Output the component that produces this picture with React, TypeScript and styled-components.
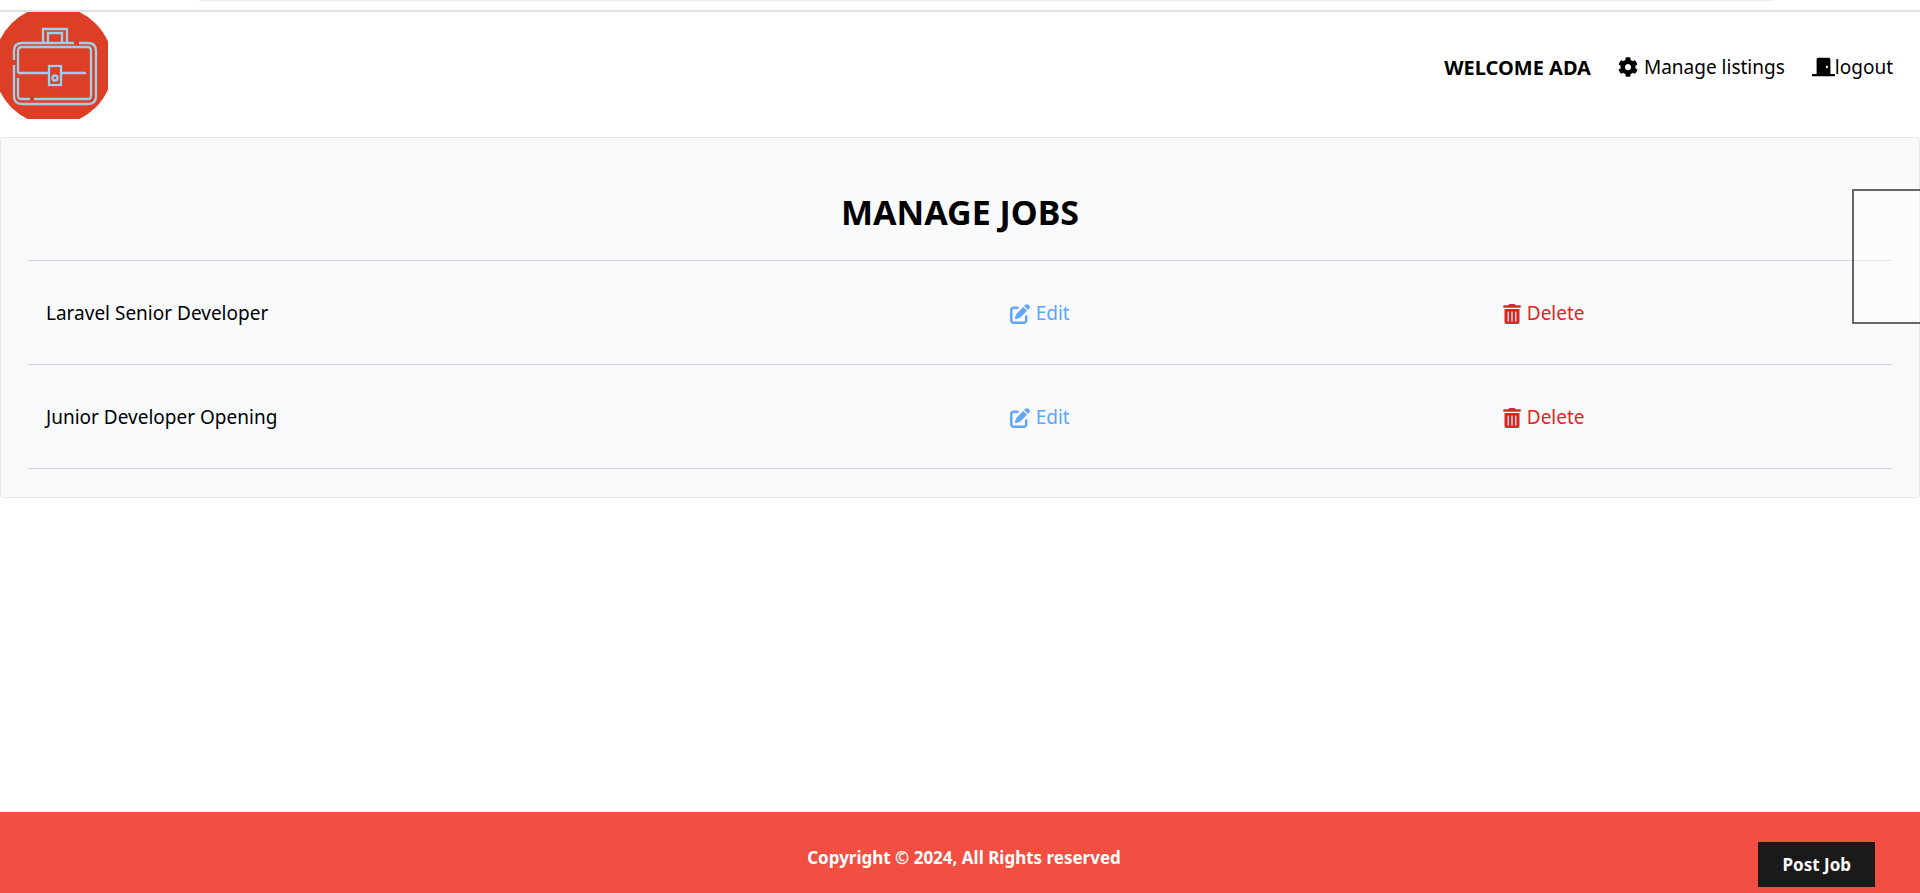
import React from "react";
import styled, { createGlobalStyle } from "styled-components";
import { FaCog, FaDoorClosed, FaTrashAlt } from "react-icons/fa";
import { FaPenToSquare } from "react-icons/fa6";

const GlobalStyle = createGlobalStyle`
  * { box-sizing: border-box; }
  body {
    margin: 0;
    background: #fff;
    color: #000;
    font-family: "Noto Sans", "Open Sans", sans-serif;
    font-size: 19px;
    line-height: 31px;
  }
  a { color: inherit; text-decoration: none; }
  button { display: block; font: inherit; color: inherit; background: none; border: 0; padding: 0; cursor: pointer; }
`;

const Page = styled.div`
  display: flex;
  flex-direction: column;
  min-height: 100vh;
  overflow-x: hidden;
  position: relative;
`;

const TopStrip = styled.div`
  display: flex;
  height: 12px;
  padding: 0 147px 0 200px;
  border-bottom: 2px solid #e1e2e2;
`;

const TopStripEdge = styled.div`
  flex: 1;
  height: 1px;
  background: #e9eef6;
`;

const Nav = styled.nav`
  display: flex;
  justify-content: space-between;
  align-items: center;
  height: 107px;
  margin-bottom: 18px;
`;

const Logo = styled.svg`
  display: block;
  width: 108px;
  height: 107px;
`;

const Menu = styled.ul`
  display: flex;
  gap: 27px;
  margin: 0 27px 0 0;
  padding: 3px 0 0;
  list-style: none;
`;

const Welcome = styled.span`
  display: block;
  font-size: 20px;
  font-weight: 700;
  text-transform: uppercase;
`;

const IconLabel = styled.span<{ $gap?: number; $icon?: number }>`
  display: flex;
  align-items: center;
  gap: ${(p) => p.$gap ?? 6}px;
  svg { width: ${(p) => p.$icon ?? 20}px; height: 20px; }
`;

const Panel = styled.main`
  padding: 27px 27px 28px;
  border: 1px solid #e5e7eb;
  border-radius: 4px;
  background: #f9fafc;
`;

const Title = styled.h1`
  margin: 27px 0;
  text-align: center;
  font-size: 34px;
  line-height: 41px;
  font-weight: 700;
  text-transform: uppercase;
`;

const Table = styled.table`
  width: 100%;
  table-layout: fixed;
  border-collapse: collapse;
`;

const Row = styled.tr`
  border-top: 1px solid #d1d3dc;
  border-bottom: 1px solid #d1d3dc;
`;

const Cell = styled.td<{ $width: string; $color?: string }>`
  width: ${(p) => p.$width};
  padding: 37px 18px 35px;
  color: ${(p) => p.$color ?? "inherit"};
`;

const SidePanel = styled.aside`
  position: absolute;
  top: 189px;
  right: -2px;
  width: 70px;
  height: 135px;
  border: 2px solid #666;
  background: rgba(255, 255, 253, 0.4);
`;

const Footer = styled.footer`
  position: relative;
  display: flex;
  justify-content: center;
  height: 81px;
  margin-top: auto;
  padding: 30px 0 0 8px;
  background: #f14f42;
  color: #fff;
  font-size: 17px;
  font-weight: 700;
`;

const Copyright = styled.p`
  margin: 0;
`;

const PostJob = styled.a`
  position: absolute;
  top: 30px;
  right: 45px;
  padding: 7px 24px;
  background: #1a1a1a;
`;

const jobs = ["Laravel Senior Developer", "Junior Developer Opening"];

function BriefcaseLogo() {
  return (
    <Logo viewBox="0 0 108 107" role="img" aria-label="Jobs home">
      <circle cx="53.500" cy="53.500" r="59.500" fill="#dc3f26" />
      <g fill="none" stroke="#9bd0e8" strokeWidth="2.300">
        <path d="M43 30V17H67V30M48 30V21H62V30" />
        <path d="M74 31H22Q14 31 14 39V48M14 53V84Q14 92 22 92H88Q96 92 96 84V39Q96 31 88 31H79" />
        <path d="M18 61V39Q18 35 22 35H88Q91 35 91 39V84Q91 87 88 87H34M30 87H22Q18 87 18 84V66M18 61H48M62 61H86" />
        <rect x="49" y="54" width="12" height="19" />
        <circle cx="55" cy="66" r="2.500" />
      </g>
    </Logo>
  );
}

export default function App() {
  return (
    <>
      <GlobalStyle />
      <Page>
        <TopStrip><TopStripEdge /></TopStrip>
        <Nav>
          <a href="#home"><BriefcaseLogo /></a>
          <Menu>
            <li><Welcome>Welcome Ada</Welcome></li>
            <li><a href="#manage"><IconLabel><FaCog />Manage listings</IconLabel></a></li>
            <li><button type="button"><IconLabel $gap={0} $icon={23}><FaDoorClosed />logout</IconLabel></button></li>
          </Menu>
        </Nav>
        <Panel>
          <Title>Manage Jobs</Title>
          <Table>
            <tbody>
              {jobs.map((job) => (
                <Row key={job}>
                  <Cell $width="51.7%">{job}</Cell>
                  <Cell $width="26.4%" $color="#60a5fa">
                    <a href="#edit"><IconLabel><FaPenToSquare />Edit</IconLabel></a>
                  </Cell>
                  <Cell $width="21.9%" $color="#dc2626">
                    <button type="button"><IconLabel $gap={5}><FaTrashAlt />Delete</IconLabel></button>
                  </Cell>
                </Row>
              ))}
            </tbody>
          </Table>
        </Panel>
        <SidePanel />
        <Footer>
          <Copyright>Copyright © 2024, All Rights reserved</Copyright>
          <PostJob href="#create">Post Job</PostJob>
        </Footer>
      </Page>
    </>
  );
}
